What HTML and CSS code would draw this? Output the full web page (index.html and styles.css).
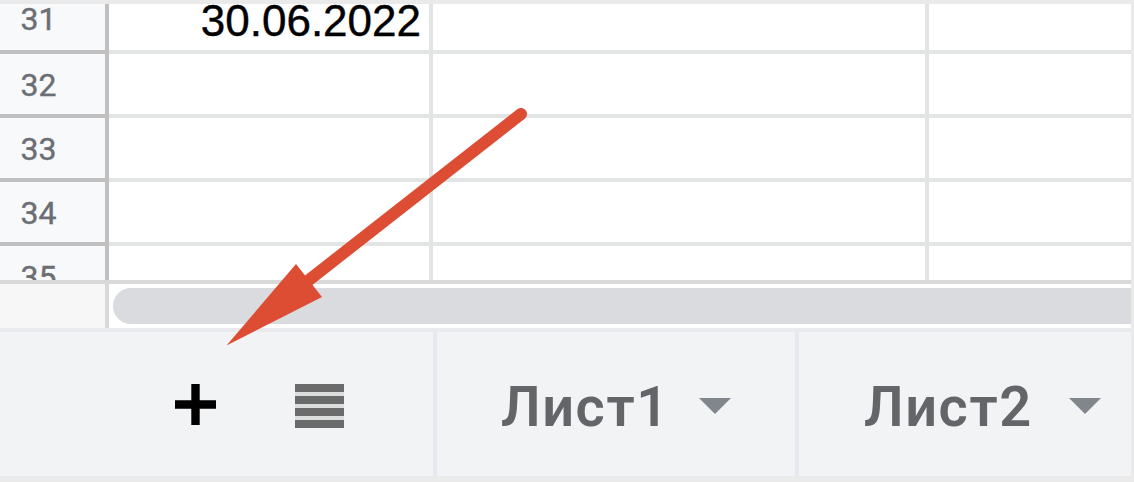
FILE: index.html
```html
<!DOCTYPE html>
<html lang="ru">
  <head>
    <meta charset="UTF-8" />
    <meta name="viewport" content="width=device-width, initial-scale=1.0" />
    <title>Таблица</title>
    <link rel="stylesheet" href="styles.css">
  </head>
  <body>
    <div class="sheet">
      <div class="grid">
        <div class="row">
          <div class="row-number">31</div>
          <div class="cell cell-a">30.06.2022</div>
          <div class="cell cell-b"></div>
          <div class="cell cell-c"></div>
        </div>
        <div class="row">
          <div class="row-number">32</div>
          <div class="cell cell-a"></div>
          <div class="cell cell-b"></div>
          <div class="cell cell-c"></div>
        </div>
        <div class="row">
          <div class="row-number">33</div>
          <div class="cell cell-a"></div>
          <div class="cell cell-b"></div>
          <div class="cell cell-c"></div>
        </div>
        <div class="row">
          <div class="row-number">34</div>
          <div class="cell cell-a"></div>
          <div class="cell cell-b"></div>
          <div class="cell cell-c"></div>
        </div>
        <div class="row">
          <div class="row-number">35</div>
          <div class="cell cell-a"></div>
          <div class="cell cell-b"></div>
          <div class="cell cell-c"></div>
        </div>
      </div>

      <div class="scroll">
        <div class="scroll-corner"></div>
        <div class="scroll-track">
          <div class="scroll-thumb"></div>
        </div>
      </div>

      <div class="tabs">
        <div class="tab-actions">
          <svg class="icon-plus" viewBox="0 0 41 41">
            <path d="M16.3 0h8.4v16.3H41v8.4H24.7V41h-8.4V24.7H0v-8.4h16.3z" />
          </svg>
          <svg class="icon-list" viewBox="0 0 49 44">
            <path class="icon-list-gap" d="M0 0h49v44H0z" />
            <path d="M0 0h49v8H0zM0 12h49v8H0zM0 24h49v8H0zM0 36h49v8H0z" />
          </svg>
        </div>
        <div class="tab">
          <span class="tab-name">Лист1</span>
          <svg class="icon-caret" viewBox="0 0 32 16"><path d="M0 0h32L16 16z" /></svg>
        </div>
        <div class="tab tab-last">
          <span class="tab-name">Лист2</span>
          <svg class="icon-caret" viewBox="0 0 32 16"><path d="M0 0h32L16 16z" /></svg>
        </div>
      </div>
    </div>

    <!-- arrow pointing at the "add sheet" button -->
    <svg class="pointer" viewBox="0 0 310 250">
      <path class="pointer-line" d="M84 190L296 24" />
      <path class="pointer-head" d="M1.5 255.5L71 174L97 207z" />
    </svg>
  </body>
</html>
```

FILE: styles.css
```css
* {
  box-sizing: border-box;
}
body {
  margin: 0;
  width: 1134px;
  height: 482px;
  padding: 4px 3px 6px 0;
  background-color: #eaeaea;
  overflow: hidden;
}
.sheet {
  height: 472px;
  background-color: #fff;
  overflow: hidden;
}

/* cells */
.grid {
  height: 276px;
  overflow: hidden;
}
.row {
  display: flex;
  height: 64px;
}
.row:first-child {
  height: 50px;
}
.row-number {
  width: 109px;
  padding: 13px 0 0 20.5px;
  border-right: 4px solid #c0c0c0;
  border-bottom: 4px solid #c0c0c0;
  background-color: #f8f9fa;
  font-family: Roboto, sans-serif;
  font-size: 32px;
  line-height: 36px;
  color: #6b6e72;
  -webkit-text-stroke: 0.4px #6b6e72;
}
.row:first-child .row-number {
  padding-top: 0;
  line-height: 30px;
}
.cell {
  border-right: 4px solid #e3e5e4;
  border-bottom: 4px solid #e3e5e4;
  font-family: "Liberation Sans", Arial, sans-serif;
  font-size: 44px;
  line-height: 34px;
  text-align: right;
  color: #000;
  -webkit-text-stroke: 0.4px #000;
}
.cell-a {
  width: 324px;
  padding-right: 8px;
}
.cell-b {
  width: 496px;
}
.cell-c {
  flex: 1;
  border-right: none;
}

/* horizontal scrollbar */
.scroll {
  display: flex;
  height: 48px;
  border-top: 4px solid #d9d9d9;
}
.scroll-corner {
  width: 109px;
  border-right: 4px solid #d9d9d9;
  background-color: #f7f7f7;
}
.scroll-track {
  flex: 1;
  padding: 4px 0 4px 4px;
}
.scroll-thumb {
  height: 36px;
  border-radius: 18px 0 0 18px;
  background-color: #dadbdf;
}

/* sheet tabs */
.tabs {
  display: flex;
  height: 148px;
  border-top: 4px solid #e8eaed;
  background-color: #f1f3f4;
}
.tab-actions {
  display: flex;
  align-items: flex-start;
  gap: 79px;
  width: 437px;
  padding: 51.5px 0 0 174.5px;
  border-right: 4px solid #e8e9ee;
}
.icon-plus {
  width: 41px;
  height: 41px;
}
.icon-list {
  width: 49px;
  height: 44px;
  fill: #6b6b6b;
}
.icon-list-gap {
  fill: #dcdddd;
}
.tab {
  display: flex;
  width: 362px;
  padding-left: 64px;
  border-right: 4px solid #e8e9ee;
}
.tab-last {
  flex: 1;
  padding-left: 65px;
  border-right: none;
}
.tab-name {
  width: 198px;
  padding-top: 42px;
  font-family: Roboto, sans-serif;
  font-size: 56px;
  font-weight: 600;
  line-height: 66px;
  letter-spacing: 1.6px;
  color: #636569;
}
.tab-last .tab-name {
  width: 205px;
}
.icon-caret {
  width: 32px;
  height: 16px;
  margin-top: 66px;
  fill: #80868b;
}

.pointer {
  position: absolute;
  left: 225px;
  top: 90px;
  width: 310px;
  height: 250px;
  overflow: visible;
}
.pointer-line {
  fill: none;
  stroke: #dc4d33;
  stroke-width: 12;
  stroke-linecap: round;
}
.pointer-head {
  fill: #dc4d33;
}
```
